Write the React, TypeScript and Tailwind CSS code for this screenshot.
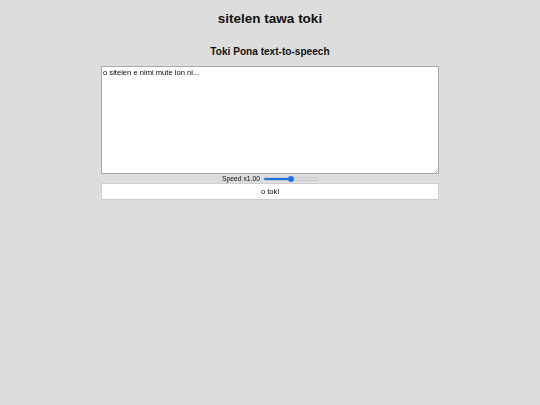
import React, { useState } from "react";

export default function App() {
  const [text, setText] = useState("o sitelen e nimi mute lon ni...");
  return (
    <div className="min-h-[405px] w-full bg-[#dddddd] font-['Liberation_Sans',Arial,sans-serif] text-[#111] antialiased">
      <div className="mx-auto flex w-[338px] flex-col items-stretch">
        <h1 className="mt-[11px] h-[16px] text-center text-[13.5px] font-bold leading-[16px]">
          sitelen tawa toki
        </h1>
        <h2 className="mt-[19px] h-[12px] text-center text-[10.1px] font-bold leading-[12px]">
          Toki Pona text-to-speech
        </h2>
        <div className="relative mt-[8px] grayscale">
          <textarea
            value={text}
            onChange={(e) => setText(e.target.value)}
            className="block h-[108px] w-[338px] resize-none border border-[#a9a9a9] bg-white px-[1px] py-[1px] text-[7.6px] leading-[9px] text-black outline-none"
          />
          <svg
            className="pointer-events-none absolute bottom-[1px] right-[1px]"
            width="5"
            height="5"
            viewBox="0 0 5 5"
          >
            <path d="M1 5 L5 1 M3 5 L5 3" stroke="#999" strokeWidth="0.6" />
          </svg>
        </div>
        <div className="flex h-[9px] items-center justify-center gap-[4px]">
          <span className="text-[6.75px] leading-[9px] grayscale">Speed x1.00</span>
          <div className="relative h-[6px] w-[54px]">
            <div className="absolute left-0 right-0 top-[2px] h-[2px] rounded-full bg-[#dcdcdc] ring-[0.5px] ring-[#b8b8b8]" />
            <div className="absolute left-0 top-[2px] h-[2px] w-[27px] rounded-full bg-[#1a73e8]" />
            <div className="absolute left-[24px] top-0 h-[6px] w-[6px] rounded-full bg-[#1a73e8]" />
          </div>
        </div>
        <button className="h-[17px] w-[338px] border border-[#cfcfcf] bg-white text-[7.6px] leading-[15px] text-black grayscale">
          o toki
        </button>
      </div>
    </div>
  );
}
